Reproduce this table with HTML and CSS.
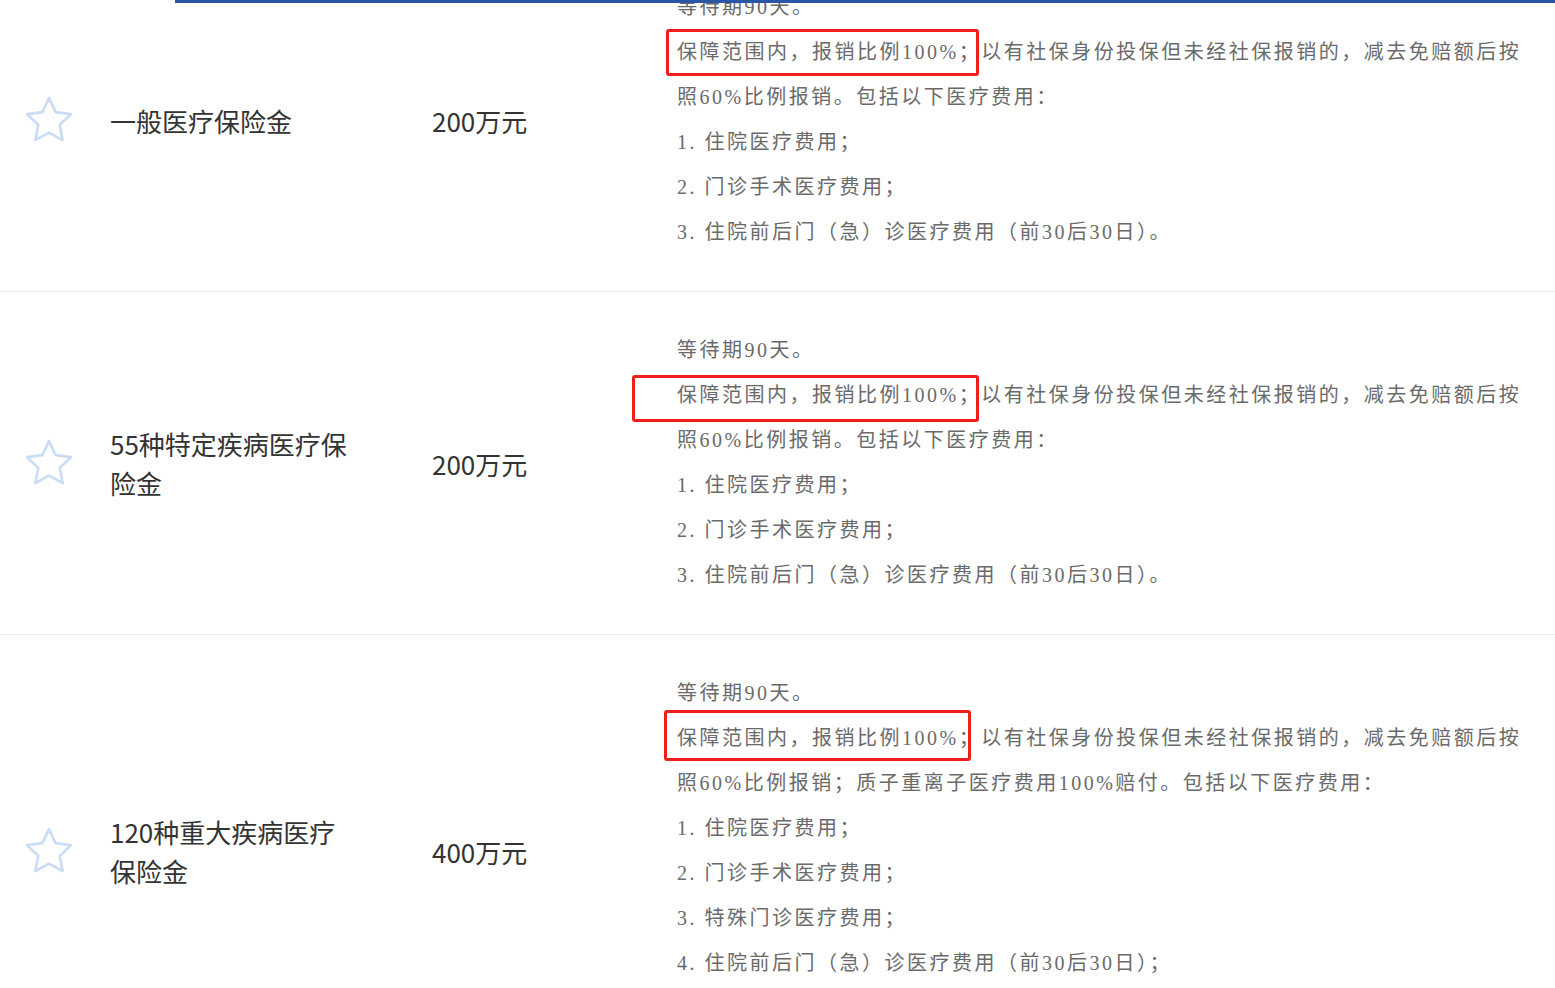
FILE: index.html
```html
<!DOCTYPE html>
<html lang="zh-CN">
<head>
<meta charset="utf-8">
<title>保障责任</title>
<link rel="stylesheet" href="styles.css">
</head>
<body>
<div class="topbar"></div>
<div class="table">
  <div class="row row-first">
    <div class="cell-star">
      <svg class="star" viewBox="0 0 24 24"><path d="M12 2.6l2.85 6.05 6.55.85-4.8 4.6 1.25 6.55L12 17.4l-5.85 3.25 1.25-6.55-4.8-4.6 6.55-.85z"/></svg>
    </div>
    <div class="cell-title"><span class="title">一般医疗保险金</span></div>
    <div class="cell-amount">200万元</div>
    <div class="cell-desc">
      <p>等待期90天。</p>
      <p><span class="mark mark-a">保障范围内，报销比例100%；</span>以有社保身份投保但未经社保报销的，减去免赔额后按照60%比例报销。包括以下医疗费用：</p>
      <p>1. 住院医疗费用；</p>
      <p>2. 门诊手术医疗费用；</p>
      <p>3. 住院前后门（急）诊医疗费用（前30后30日）。</p>
    </div>
  </div>
  <div class="row">
    <div class="cell-star">
      <svg class="star" viewBox="0 0 24 24"><path d="M12 2.6l2.85 6.05 6.55.85-4.8 4.6 1.25 6.55L12 17.4l-5.85 3.25 1.25-6.55-4.8-4.6 6.55-.85z"/></svg>
    </div>
    <div class="cell-title"><span class="title">55种特定疾病医疗保险金</span></div>
    <div class="cell-amount">200万元</div>
    <div class="cell-desc">
      <p>等待期90天。</p>
      <p><span class="mark mark-b">保障范围内，报销比例100%；</span>以有社保身份投保但未经社保报销的，减去免赔额后按照60%比例报销。包括以下医疗费用：</p>
      <p>1. 住院医疗费用；</p>
      <p>2. 门诊手术医疗费用；</p>
      <p>3. 住院前后门（急）诊医疗费用（前30后30日）。</p>
    </div>
  </div>
  <div class="row">
    <div class="cell-star">
      <svg class="star" viewBox="0 0 24 24"><path d="M12 2.6l2.85 6.05 6.55.85-4.8 4.6 1.25 6.55L12 17.4l-5.85 3.25 1.25-6.55-4.8-4.6 6.55-.85z"/></svg>
    </div>
    <div class="cell-title"><span class="title">120种重大疾病医疗保险金</span></div>
    <div class="cell-amount">400万元</div>
    <div class="cell-desc">
      <p>等待期90天。</p>
      <p><span class="mark mark-c">保障范围内，报销比例100%；</span>以有社保身份投保但未经社保报销的，减去免赔额后按照60%比例报销；质子重离子医疗费用100%赔付。包括以下医疗费用：</p>
      <p>1. 住院医疗费用；</p>
      <p>2. 门诊手术医疗费用；</p>
      <p>3. 特殊门诊医疗费用；</p>
      <p>4. 住院前后门（急）诊医疗费用（前30后30日）；</p>
      <p>5. 院外特定药品费用。</p>
    </div>
  </div>
</div>
</body>
</html>
```

FILE: styles.css
```css
html, body {
  margin: 0;
  padding: 0;
  background: #fff;
  overflow: hidden;
}
body {
  font-family: "Noto Sans CJK SC", "Noto Sans", sans-serif;
  color: #333;
}
.topbar {
  position: fixed;
  top: 0;
  left: 175px;
  right: 0;
  height: 3px;
  background: #2a56a6;
  z-index: 5;
}
.table {
  margin-top: -51px;
}
.row {
  display: grid;
  grid-template-columns: 110px 322px 245px 1fr;
  align-items: center;
  border-bottom: 1px solid #ececec;
}
.cell-star {
  display: flex;
  padding-left: 21px;
}
.star {
  width: 56px;
  height: 56px;
  fill: none;
  stroke: #cadcf6;
  stroke-width: 1.15;
  stroke-linejoin: round;
}
.cell-title {
  font-size: 26px;
  line-height: 39px;
}
.title {
  display: block;
  width: 245px;
}
.cell-amount {
  font-size: 26px;
  line-height: 39px;
}
.cell-desc {
  padding: 36px 0;
  width: 852px;
  font-family: "Liberation Serif", "Noto Sans CJK SC", serif;
  font-size: 20px;
  letter-spacing: 2.5px;
  line-height: 45px;
  color: #6a6a6a;
}
.cell-desc p {
  margin: 0;
}
.mark {
  position: relative;
  display: inline-block;
}
.mark::after {
  content: "";
  position: absolute;
  border: 3px solid #f01d1d;
  border-radius: 3px;
  pointer-events: none;
}
.mark-a::after {
  left: -11px;
  right: 2px;
  top: -1px;
  bottom: -1px;
}
.mark-b::after {
  left: -45px;
  right: 2px;
  top: 2px;
  bottom: -4px;
}
.mark-c::after {
  left: -13px;
  right: 10px;
  top: -6px;
  bottom: 0;
}
```
